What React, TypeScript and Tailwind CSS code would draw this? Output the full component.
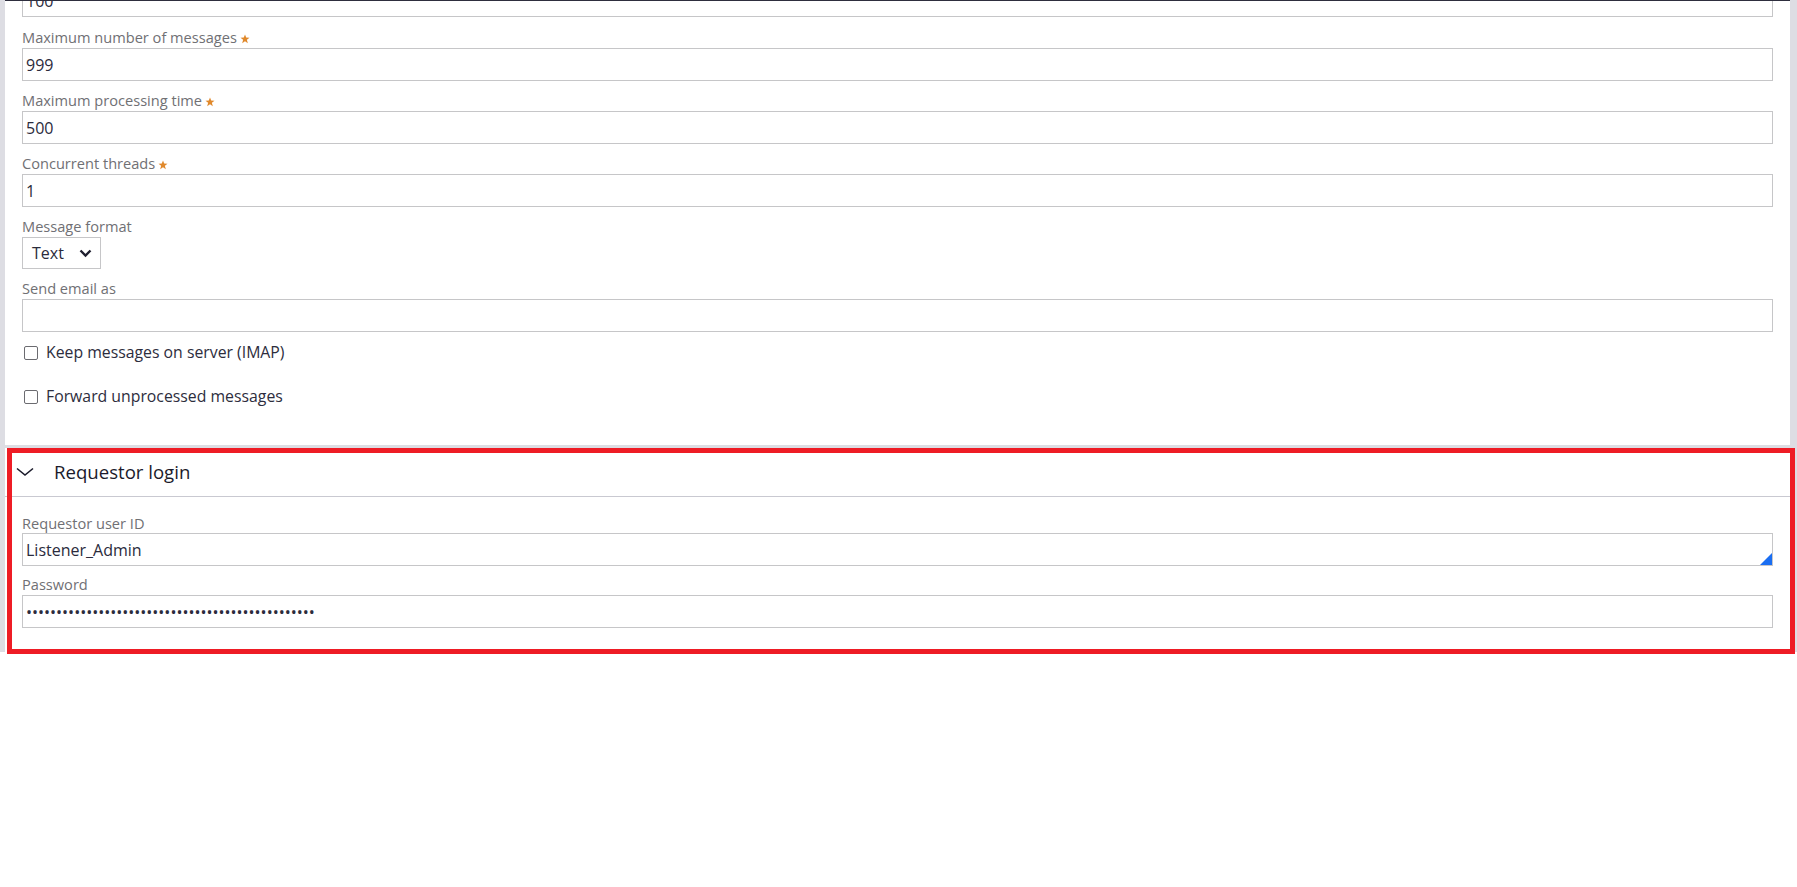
import React from "react";

const Star = () => (
  <svg width="10" height="10" viewBox="0 0 10 10" className="ml-[3px] inline-block mt-[3px]">
    <polygon
      points="5,0.5 6.2,3.6 9.5,3.7 6.9,5.8 7.8,9.2 5,7.3 2.2,9.2 3.1,5.8 0.5,3.7 3.8,3.6"
      fill="#e0892c"
    />
  </svg>
);

const Label = ({ text, required = false, className = "" }) => (
  <div className={`h-[20px] leading-[20px] text-[14.6px] text-[#707074] flex items-center ${className}`}>
    {text}
    {required && <Star />}
  </div>
);

const TextInput = ({ value = "", type = "text", className = "" }) => (
  <input
    type={type}
    readOnly
    value={value}
    className={`block w-full h-[33px] border border-[#c6c6c8] bg-white pl-[3px] text-[16px] text-[#2b2b3c] outline-none font-['Open_Sans'] ${className}`}
  />
);

const Checkbox = ({ text, className = "" }) => (
  <label className={`flex items-center h-[24px] pl-[2px] gap-[8px] ${className}`}>
    <span className="w-[14px] h-[14px] border border-[#6b6b70] rounded-[2px] bg-white" />
    <span className="text-[15.8px] text-[#2d2d3d]">{text}</span>
  </label>
);

const App = () => {
  return (
    <div className="relative min-h-screen bg-white font-['Open_Sans',sans-serif]">
      <div className="bg-[#dddde3] pl-[5px] pr-[7px] flex flex-col gap-[3px]">
        {/* top settings panel */}
        <div className="bg-white border-t border-[#2e2e3e] overflow-hidden px-[17px] pb-[36px]">
          <TextInput value="100" className="-mt-[17px]" />
          <Label text="Maximum number of messages" required className="mt-[10px] mb-[1px]" />
          <TextInput value="999" />
          <Label text="Maximum processing time" required className="mt-[9px] mb-[1px]" />
          <TextInput value="500" />
          <Label text="Concurrent threads" required className="mt-[9px] mb-[1px]" />
          <TextInput value="1" />
          <Label text="Message format" className="mt-[9px] mb-[1px]" />
          <div className="w-[79px] h-[32px] border border-[#c6c6c8] flex items-center justify-between pl-[9px] pr-[8px] text-[16px] text-[#2b2b3c]">
            <span>Text</span>
            <svg width="13" height="9" viewBox="0 0 13 9">
              <polyline points="1.5,1.5 6.5,6.5 11.5,1.5" fill="none" stroke="#1f1f2f" strokeWidth="2.4" />
            </svg>
          </div>
          <Label text="Send email as" className="mt-[9px] mb-[1px]" />
          <TextInput value="" />
          <Checkbox text="Keep messages on server (IMAP)" className="mt-[9px]" />
          <Checkbox text="Forward unprocessed messages" className="mt-[20px]" />
        </div>

        {/* requestor login panel */}
        <div className="relative bg-white">
          <div className="h-[49px] border-b border-[#c9c9d1] flex items-center pl-[11px] gap-[20px]">
            <svg width="18" height="10" viewBox="0 0 18 10">
              <polyline points="1,1.5 9,8 17,1.5" fill="none" stroke="#1b1b2b" strokeWidth="1.6" />
            </svg>
            <span className="text-[18.6px] font-medium text-[#1b1b2b]">Requestor login</span>
          </div>
          <div className="px-[17px] pt-[16px] pb-[24px]">
            <Label text="Requestor user ID" />
            <div className="relative">
              <TextInput value="Listener_Admin" />
              <svg width="12" height="12" viewBox="0 0 12 12" className="absolute right-[1px] bottom-[1px]">
                <polygon points="12,0 12,12 0,12" fill="#1a6ef2" />
              </svg>
            </div>
            <Label text="Password" className="mt-[8px] mb-[1px]" />
            <TextInput type="password" value={"x".repeat(48)} />
          </div>
          <div className="absolute left-[2px] -right-[5px] top-0 -bottom-[2px] border-[5px] border-[#ee1c25] pointer-events-none" />
        </div>
      </div>
    </div>
  );
};

export default App;
